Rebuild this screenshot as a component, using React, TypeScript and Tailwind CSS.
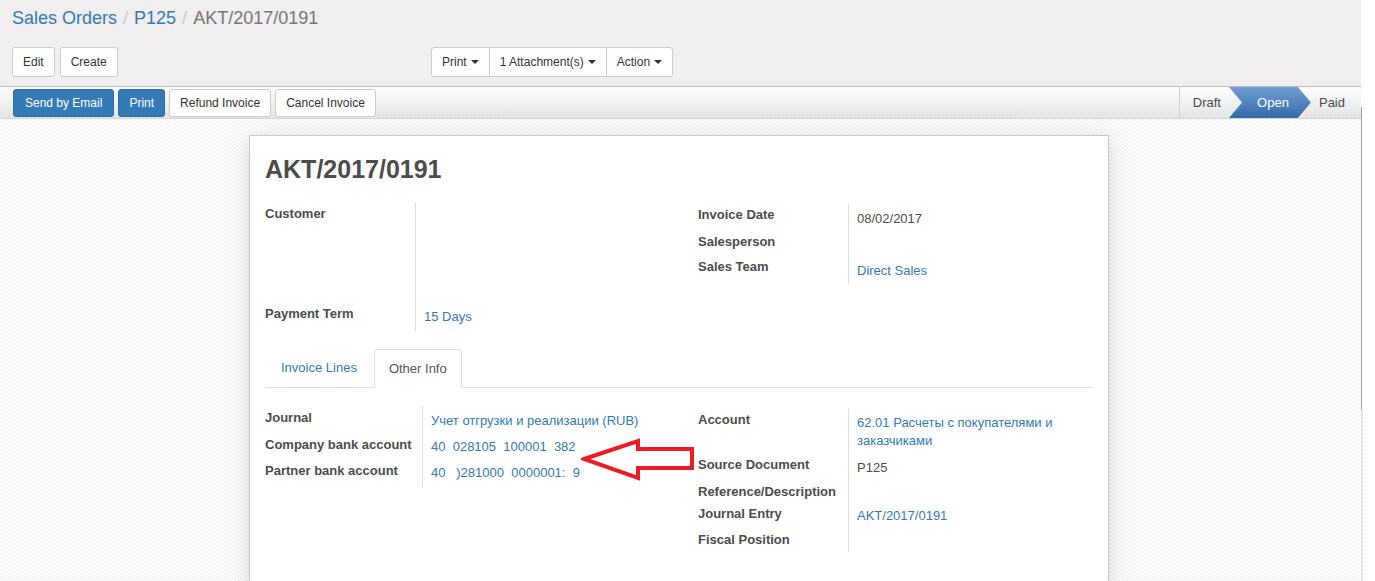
import React from 'react'

const font = {fontFamily: '"Liberation Sans", Arial, sans-serif'}

function Caret() {
  return <span className="inline-block ml-1 align-middle w-0 h-0 border-x-[4px] border-x-transparent border-t-[4px] border-t-[#333]"></span>
}

function Row({label, value, link, labelW, h, lpt = 4, vpt = 6, valueClass = ''}: {label: string; value?: React.ReactNode; link?: boolean; labelW: string; h: string; lpt?: number; vpt?: number; valueClass?: string}) {
  return (
    <div className={`flex ${h}`}>
      <div className={`${labelW} shrink-0 font-bold text-[13px] leading-[18px] text-[#4c4c4c]`} style={{paddingTop: lpt}}>
        {label}
      </div>
      <div className={`pl-2 text-[13px] leading-[18px] ${link ? 'text-[#337ab7]' : 'text-[#4c4c4c]'} ${valueClass}`} style={{paddingTop: vpt}}>
        {value}
      </div>
    </div>
  )
}

export default function App() {
  return (
    <div className="flex h-[581px] w-[1375px] overflow-hidden bg-white" style={font}>
      <div className="flex-1 flex flex-col min-w-0">
        {/* control panel */}
        <div className="shrink-0 bg-[#f0eeee] h-[87px] px-3 border-b border-[#bdbdbd]">
          <div className="flex items-center h-[36px] text-[18px] pt-[1px]">
            <span className="text-[#337ab7]">Sales Orders</span>
            <span className="text-[#ccc] px-[6px]">/</span>
            <span className="text-[#337ab7]">P125</span>
            <span className="text-[#ccc] px-[6px]">/</span>
            <span className="text-[#777]">AKT/2017/0191</span>
          </div>
          <div className="flex items-center mt-[11px]">
            <div className="flex gap-[5px] w-[419px]">
              <button className="h-[30px] px-[10px] text-[12px] text-[#333] bg-white border border-[#ccc] rounded-[3px]">Edit</button>
              <button className="h-[30px] px-[10px] text-[12px] text-[#333] bg-white border border-[#ccc] rounded-[3px]">Create</button>
            </div>
            <div className="flex h-[30px] border border-[#ccc] rounded-[3px] bg-white text-[12px] text-[#333]">
              <div className="flex items-center px-[10px] border-r border-[#ccc]">Print<Caret /></div>
              <div className="flex items-center px-[10px] border-r border-[#ccc]">1 Attachment(s)<Caret /></div>
              <div className="flex items-center px-[10px]">Action<Caret /></div>
            </div>
          </div>
        </div>

        {/* statusbar */}
        <div className="shrink-0 flex items-center justify-between h-[32px] bg-[linear-gradient(#fdfdfd,#e4e4e4)] border-b border-[#d6d6d6] pl-[13px] pr-[1px]">
          <div className="flex gap-[4px] text-[12px]">
            <button className="h-[28px] px-[11px] text-white bg-[#337ab7] border border-[#2e6da4] rounded-[3px]">Send by Email</button>
            <button className="h-[28px] px-[10px] text-white bg-[#337ab7] border border-[#2e6da4] rounded-[3px]">Print</button>
            <button className="h-[28px] px-[10px] text-[#333] bg-white border border-[#ccc] rounded-[3px]">Refund Invoice</button>
            <button className="h-[28px] px-[10px] text-[#333] bg-white border border-[#ccc] rounded-[3px]">Cancel Invoice</button>
          </div>
          <div className="flex h-full items-stretch text-[13px] text-[#4c4c4c] border-l border-[#d0d0d0]">
            <div className="flex items-center pl-[13px] pr-[10px]">Draft</div>
            <div className="flex items-center justify-center w-[82px] -ml-[2px] pl-[6px] text-white bg-[linear-gradient(#6f9fd6,#3569a8)] [clip-path:polygon(0_0,84%_0,100%_50%,84%_100%,0_100%,16%_50%)]">Open</div>
            <div className="flex items-center pl-[8px] pr-[15px]">Paid</div>
          </div>
        </div>

        {/* sheet area */}
        <div className="flex-1 flex justify-center pr-[3px] pt-[16px] bg-[repeating-conic-gradient(#f4f4f4_0_25%,#ffffff_0_50%)] bg-[length:4px_4px]">
          <div className="relative w-[860px] h-[600px] shrink-0 bg-white border border-[#c8c8d3] shadow-[0_4px_20px_rgba(0,0,0,0.15)] px-[15px]">
            <h1 className="text-[25px] font-bold text-[#4c4c4c] mt-[17px] leading-[32px]">AKT/2017/0191</h1>

            <div className="flex mt-[18px]">
              <div className="w-[413px]">
                <div className="flex h-[98px]">
                  <div className="w-[151px] shrink-0 border-r border-[#ddd] font-bold text-[13px] leading-[18px] text-[#4c4c4c] pt-[2px]">Customer</div>
                  <div></div>
                </div>
                <div className="flex h-[30px]">
                  <div className="w-[151px] shrink-0 border-r border-[#ddd] font-bold text-[13px] leading-[18px] text-[#4c4c4c] pt-[4px]">Payment Term</div>
                  <div className="pl-2 text-[13px] leading-[18px] text-[#337ab7] pt-[7px]">15 Days</div>
                </div>
              </div>
              <div className="pl-[20px] pt-[1px]">
                <Row labelW="w-[151px] border-r border-[#ddd]" h="h-[27px]" label="Invoice Date" value="08/02/2017" lpt={2} vpt={6} />
                <Row labelW="w-[151px] border-r border-[#ddd]" h="h-[26px]" label="Salesperson" value="" lpt={2} />
                <Row labelW="w-[151px] border-r border-[#ddd]" h="h-[27px]" label="Sales Team" value="Direct Sales" link lpt={1} vpt={5} />
              </div>
            </div>

            {/* tabs */}
            <div className="flex mt-[18px] h-[39px] border-b border-[#ddd] text-[13px]">
              <div className="flex items-center px-[16px] text-[#337ab7]">Invoice Lines</div>
              <div className="flex items-center px-[14px] text-[#555] bg-white border border-[#ddd] border-b-white rounded-t-[4px] -mb-[1px] ml-[1px]">Other Info</div>
            </div>

            <div className="flex mt-[18px]">
              <div className="w-[413px]">
                <Row labelW="w-[158px] border-r border-[#ddd]" h="h-[27px]" label="Journal" value="Учет отгрузки и реализации (RUB)" link lpt={3} vpt={6} />
                <Row labelW="w-[158px] border-r border-[#ddd]" h="h-[26px]" label="Company bank account" value={'40\u00a0\u00a0028105\u00a0\u00a0100001\u00a0\u00a0382'} link lpt={3} vpt={5} />
                <Row labelW="w-[158px] border-r border-[#ddd]" h="h-[28px]" label="Partner bank account" value={'40\u00a0\u00a0\u00a0)281000\u00a0\u00a00000001:\u00a0\u00a09'} link lpt={3} vpt={5} />
              </div>
              <div className="pl-[20px] pt-[3px]">
                <div className="flex h-[45px]">
                  <div className="w-[151px] shrink-0 border-r border-[#ddd] font-bold text-[13px] leading-[18px] text-[#4c4c4c] pt-[2px]">Account</div>
                  <div className="pl-2 w-[240px] text-[13px] leading-[18px] text-[#337ab7] pt-[5px]">62.01 Расчеты с покупателями и заказчиками</div>
                </div>
                <Row labelW="w-[151px] border-r border-[#ddd]" h="h-[27px]" label="Source Document" value="P125" lpt={2} vpt={5} />
                <Row labelW="w-[151px] border-r border-[#ddd]" h="h-[23px]" label="Reference/Description" value="" lpt={2} />
                <Row labelW="w-[151px] border-r border-[#ddd]" h="h-[26px]" label="Journal Entry" value="AKT/2017/0191" link lpt={1} vpt={3} />
                <Row labelW="w-[151px] border-r border-[#ddd]" h="h-[22px]" label="Fiscal Position" value="" lpt={1} />
              </div>
            </div>

            {/* red arrow annotation */}
            <svg className="absolute left-[331px] top-[302px]" width="116" height="46" viewBox="0 0 116 46">
              <polygon points="3,21 57,3 57,11 111,11 111,30 57,30 57,40" fill="white" stroke="#ed1c24" strokeWidth="4" strokeLinejoin="miter" />
            </svg>
          </div>
        </div>
      </div>

      {/* scrollbar strip */}
      <div className="w-[14px] flex flex-col bg-white">
        <div className="h-[107px]"></div>
        <div className="h-[303px] border-l border-[#a0a0a0]"></div>
        <div className="flex-1 border-l-2 border-[#e4e4e4]"></div>
      </div>
    </div>
  )
}
